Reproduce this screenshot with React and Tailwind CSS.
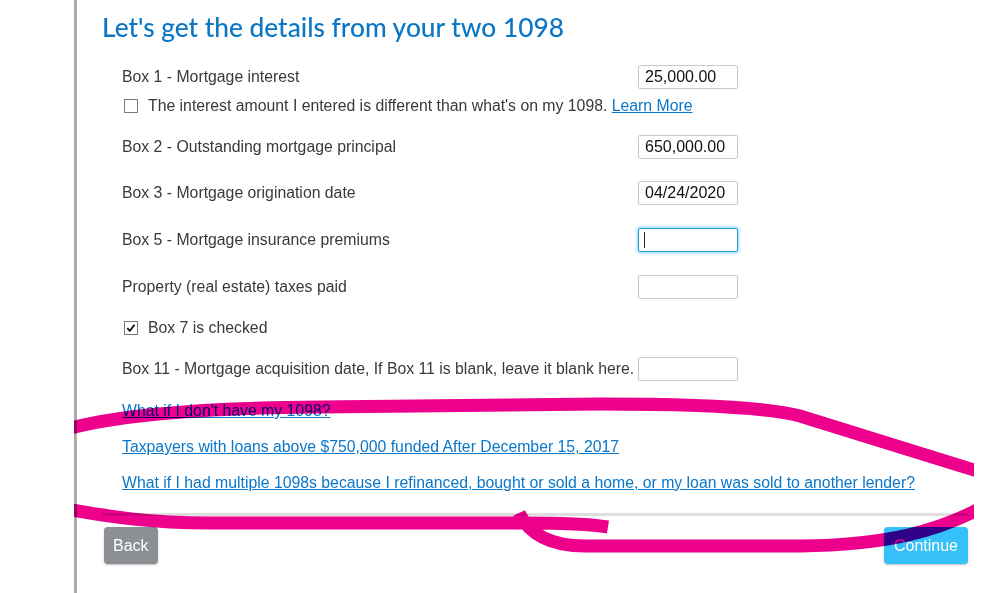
const rows = [
  { label: 'Box 2 - Outstanding mortgage principal', value: '650,000.00', mt: 'mt-[19px]' },
  { label: 'Box 3 - Mortgage origination date', value: '04/24/2020', mt: 'mt-[22px]' },
]

function Field({ value, focused }) {
  if (focused) {
    return (
      <div className="w-[100px] h-6 border border-[#2a9fe0] rounded-[2px] shadow-[0_0_3px_1px_rgba(60,170,240,0.55)] flex items-center pl-[5px] bg-white">
        <span className="w-px h-4 bg-[#222]" />
      </div>
    )
  }
  return (
    <div className="w-[100px] h-6 border border-[#c9c9c9] rounded-[2px] flex items-center pl-[6px] text-[16px] text-[#111] bg-white">
      {value}
    </div>
  )
}

function Row({ label, value, focused, className = '' }) {
  return (
    <div className={`flex items-center h-6 ${className}`}>
      <div className="w-[516px] whitespace-nowrap">{label}</div>
      <Field value={value} focused={focused} />
    </div>
  )
}

function Box({ checked }) {
  return (
    <span className="w-[14px] h-[14px] border border-[#7a7a7a] bg-white flex items-center justify-center shrink-0">
      {checked && (
        <svg width="12" height="12" viewBox="0 0 12 12">
          <path d="M2.3 6.2 L4.8 8.8 L9.6 2.8" fill="none" stroke="#111" strokeWidth="1.8" />
        </svg>
      )}
    </span>
  )
}

function Scribble() {
  return (
    <svg className="absolute inset-0 pointer-events-none mix-blend-multiply" width="998" height="593" viewBox="0 0 998 593">
      <defs>
        <clipPath id="cut">
          <rect x="74" y="0" width="900" height="593" />
        </clipPath>
      </defs>
      <g clipPath="url(#cut)" fill="none" stroke="#ec008c" strokeWidth="13">
        <path d="M60 431 C105 417 180 408 320 407 L600 404 C700 404 770 408 800 416 L990 475" />
        <path d="M60 508 C110 517 150 523 210 523 L520 523 C565 523 590 524 608 527" />
        <path d="M519 513 C530 536 552 546 585 546 L800 546 C885 545 940 532 990 503" />
      </g>
    </svg>
  )
}

export default function App() {
  return (
    <div className="relative w-[998px] h-[593px] overflow-hidden bg-white flex font-['Liberation_Sans',Arial,sans-serif]">
      <div className="w-[74px] shrink-0" />
      <div className="w-[3px] shrink-0 bg-[#ababab]" />
      <main className="flex-1 pl-[25px]">
        <h1 className="mt-[11px] h-8 leading-8 text-[26.3px] font-medium text-[#0b77c4] font-['Lato','Open_Sans',sans-serif]">
          Let's get the details from your two 1098
        </h1>
        <div className="pl-5 mt-[22px] text-[15.8px] text-[#393939]">
          <Row label="Box 1 - Mortgage interest" value="25,000.00" />
          <div className="flex items-center h-5 mt-[7px] pl-[2px] gap-[10px]">
            <Box />
            <span>
              The interest amount I entered is different than what's on my 1098.{' '}
              <a href="#" className="text-[#0a77c8] underline">Learn More</a>
            </span>
          </div>
          {rows.map((r) => (
            <Row key={r.label} label={r.label} value={r.value} className={r.mt} />
          ))}
          <Row label="Box 5 - Mortgage insurance premiums" focused className="mt-[23px]" />
          <Row label="Property (real estate) taxes paid" value="" className="mt-[23px]" />
          <div className="flex items-center h-5 mt-[19px] pl-[2px] gap-[10px]">
            <Box checked />
            <span>Box 7 is checked</span>
          </div>
          <Row label="Box 11 - Mortgage acquisition date, If Box 11 is blank, leave it blank here." value="" className="mt-[19px]" />
          <div className="flex flex-col gap-4 mt-5 text-[#0a77c8]">
            <a href="#" className="h-5 leading-5 underline">What if I don't have my 1098?</a>
            <a href="#" className="h-5 leading-5 underline">Taxpayers with loans above $750,000 funded After December 15, 2017</a>
            <a href="#" className="h-5 leading-5 underline">What if I had multiple 1098s because I refinanced, bought or sold a home, or my loan was sold to another lender?</a>
          </div>
        </div>
        <div className="mt-5 mr-[30px] h-[3px] bg-[#dedede]" />
        <div className="mt-[11px] ml-[2px] mr-[30px] flex justify-between">
          <button className="h-[37px] px-[9px] rounded-[4px] bg-[#8c8f94] text-white text-[16px] shadow-[0_1px_2px_rgba(0,0,0,0.25)]">
            Back
          </button>
          <button className="h-[37px] px-[10px] rounded-[4px] bg-[#35c1f8] text-white text-[16px] shadow-[0_1px_2px_rgba(0,0,0,0.25)]">
            Continue
          </button>
        </div>
      </main>
      <Scribble />
    </div>
  )
}
